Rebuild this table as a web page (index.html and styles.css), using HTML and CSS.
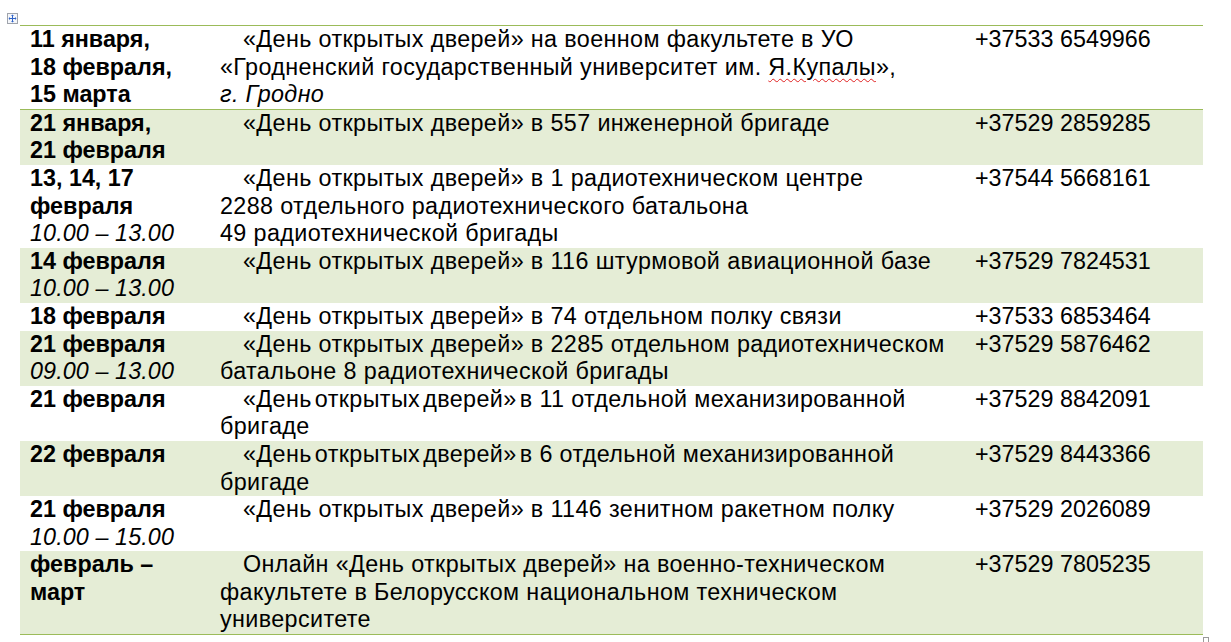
FILE: index.html
```html
<!DOCTYPE html>
<html lang="ru">
<head>
<meta charset="utf-8">
<title>День открытых дверей</title>
<link rel="stylesheet" href="styles.css">
</head>
<body>
<div class="page">
  <span class="move-handle" aria-hidden="true">
    <svg width="11" height="11" viewBox="0 0 11 11">
      <rect x="0.5" y="0.5" width="10" height="10" fill="#f4f6fa" stroke="#a0a4ac"/>
      <path d="M5.5 2v7M2 5.5h7" stroke="#2f63c8" stroke-width="1"/>
      <path d="M5.5 1.5l-1.5 1.5h3zM5.5 9.5l-1.5-1.5h3zM1.5 5.5l1.5-1.5v3zM9.5 5.5l-1.5-1.5v3z" fill="#2f63c8"/>
    </svg>
  </span>
  <table class="events">
    <colgroup>
      <col class="c-date">
      <col class="c-text">
      <col class="c-phone">
    </colgroup>
    <tbody>
      <tr class="head">
        <td class="date"><b>11 января,<br>18 февраля,<br>15 марта</b></td>
        <td class="desc"><span class="ind">«День открытых дверей» на военном факультете в УО</span><br>«Гродненский государственный университет им. <span class="spell">Я.Купалы</span>»,<br><i>г. Гродно</i></td>
        <td class="phone">+37533 6549966</td>
      </tr>
      <tr class="band">
        <td class="date"><b>21 января,<br>21 февраля</b></td>
        <td class="desc"><span class="ind">«День открытых дверей» в 557 инженерной бригаде</span></td>
        <td class="phone">+37529 2859285</td>
      </tr>
      <tr>
        <td class="date"><b>13, 14, 17<br>февраля</b><br><i>10.00 – 13.00</i></td>
        <td class="desc"><span class="ind">«День открытых дверей» в 1 радиотехническом центре</span><br>2288 отдельного радиотехнического батальона<br>49 радиотехнической бригады</td>
        <td class="phone">+37544 5668161</td>
      </tr>
      <tr class="band">
        <td class="date"><b>14 февраля</b><br><i>10.00 – 13.00</i></td>
        <td class="desc"><span class="ind">«День открытых дверей» в 116 штурмовой авиационной базе</span></td>
        <td class="phone">+37529 7824531</td>
      </tr>
      <tr>
        <td class="date"><b>18 февраля</b></td>
        <td class="desc"><span class="ind">«День открытых дверей» в 74 отдельном полку связи</span></td>
        <td class="phone">+37533 6853464</td>
      </tr>
      <tr class="band">
        <td class="date"><b>21 февраля</b><br><i>09.00 – 13.00</i></td>
        <td class="desc"><span class="ind">«День открытых дверей» в 2285 отдельном радиотехническом</span><br>батальоне 8 радиотехнической бригады</td>
        <td class="phone">+37529 5876462</td>
      </tr>
      <tr>
        <td class="date"><b>21 февраля</b></td>
        <td class="desc"><span class="ind"><span class="tight">«День открытых дверей» в</span> 11 отдельной механизированной</span><br>бригаде</td>
        <td class="phone">+37529 8842091</td>
      </tr>
      <tr class="band">
        <td class="date"><b>22 февраля</b></td>
        <td class="desc"><span class="ind"><span class="tight">«День открытых дверей» в</span> 6 отдельной механизированной</span><br>бригаде</td>
        <td class="phone">+37529 8443366</td>
      </tr>
      <tr>
        <td class="date"><b>21 февраля</b><br><i>10.00 – 15.00</i></td>
        <td class="desc"><span class="ind">«День открытых дверей» в 1146 зенитном ракетном полку</span></td>
        <td class="phone">+37529 2026089</td>
      </tr>
      <tr class="band last">
        <td class="date"><b>февраль –<br>март</b></td>
        <td class="desc"><span class="ind">Онлайн «День открытых дверей» на военно-техническом</span><br>факультете в Белорусском национальном техническом<br>университете</td>
        <td class="phone">+37529 7805235</td>
      </tr>
    </tbody>
  </table>
  <span class="resize-handle" aria-hidden="true"></span>
</div>
</body>
</html>
```

FILE: styles.css
```css
html, body {
  margin: 0;
  padding: 0;
  background: #ffffff;
}

.page {
  position: relative;
  padding: 25px 0 0 20px;
  height: 617px;
  overflow: hidden;
  font-family: "Liberation Sans", Arial, sans-serif;
  font-size: 23.33px;
  line-height: 27.6px;
  color: #000;
}

.move-handle {
  position: absolute;
  left: 7px;
  top: 13px;
  width: 11px;
  height: 11px;
  line-height: 0;
}

.resize-handle {
  position: absolute;
  left: 1203px;
  top: 637px;
  width: 4px;
  height: 6px;
  border: 1px solid #9a9a9a;
  border-bottom: none;
}

.events {
  border-collapse: collapse;
  table-layout: fixed;
  width: 1183px;
  border-top: 1px solid #9bbb59;
}

.c-date { width: 190px; }
.c-text { width: 755px; }
.c-phone { width: 238px; }

.events td {
  padding: 0 0 0 10px;
  vertical-align: top;
}

.events tr.head td {
  border-bottom: 1px solid #9bbb59;
}

.events tr.last td {
  border-bottom: 1px solid #9bbb59;
}

.events tr.band td {
  background: #e5edd6;
}

.date b {
  font-weight: bold;
}

.date i {
  font-style: italic;
  letter-spacing: 0.1px;
}

.desc {
  letter-spacing: 0.38px;
}

.desc i {
  font-style: italic;
}

.ind {
  display: inline-block;
  padding-left: 23px;
}

.tight {
  word-spacing: -3.7px;
}

.spell {
  text-decoration: underline wavy #e02020;
  text-decoration-thickness: 1px;
  text-underline-offset: 3px;
}

.phone {
  padding-left: 9px;
}
```
